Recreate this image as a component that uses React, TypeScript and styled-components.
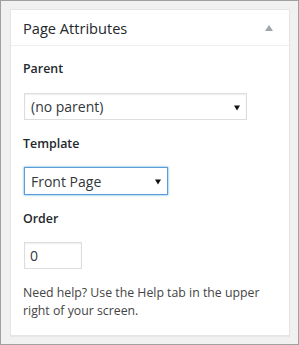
import React from "react";
import styled, { createGlobalStyle } from "styled-components";

const Global = createGlobalStyle`
  html, body { margin: 0; padding: 0; background: #f1f1f1; }
  * { box-sizing: border-box; }
`;

const Frame = styled.div`
  width: 299px;
  height: 345px;
  border: 1px solid #a0a0a0;
  background: #f1f1f1;
  padding: 8px 8px 8px 9px;
  font-family: "Open Sans", "Liberation Sans", sans-serif;
  color: #23282d;
`;

const Postbox = styled.div`
  width: 280px;
  height: 327px;
  background: #fff;
  border: 1px solid #e5e5e5;
  box-shadow: 0 1px 1px rgba(0, 0, 0, 0.04);
  display: flex;
  flex-direction: column;
`;

const Header = styled.div`
  height: 36px;
  border-bottom: 1px solid #eee;
  display: flex;
  align-items: center;
  justify-content: space-between;
  padding: 0 12px 0 12px;
`;

const Title = styled.h2`
  margin: 0;
  font-size: 14.6px;
  font-weight: 400;
  line-height: 20px;
  color: #23282d;
`;

const Toggle = styled.svg`
  width: 8px;
  height: 6px;
  margin-right: 4px;
`;

const Inside = styled.div`
  padding: 13px 12px 12px 12px;
  display: flex;
  flex-direction: column;
`;

const Label = styled.p<{ $top?: number }>`
  margin: ${(p) => p.$top ?? 0}px 0 0 0;
  font-size: 12.4px;
  font-weight: 600;
  line-height: 20px;
  color: #23282d;
`;

const SelectWrap = styled.div<{ $width: number; $top: number }>`
  position: relative;
  width: ${(p) => p.$width}px;
  margin: ${(p) => p.$top}px 0 0 1px;
`;

const Select = styled.select<{ $focus?: boolean; $height: number }>`
  appearance: none;
  -webkit-appearance: none;
  display: block;
  width: 100%;
  height: ${(p) => p.$height}px;
  margin: 0;
  padding: 0 20px 0 6px;
  font-family: "Open Sans", "Liberation Sans", sans-serif;
  font-size: 14px;
  color: #32373c;
  background: #fff;
  border: 1px solid ${(p) => (p.$focus ? "#5b9dd9" : "#ddd")};
  border-radius: 0;
  box-shadow: ${(p) =>
    p.$focus
      ? "0 0 2px rgba(30, 140, 190, 0.8)"
      : "inset 0 1px 2px rgba(0, 0, 0, 0.07)"};
  outline: none;
`;

const Arrow = styled.svg`
  position: absolute;
  right: 7px;
  top: 50%;
  width: 6px;
  height: 6px;
  margin-top: -2px;
  pointer-events: none;
`;

const NumberInput = styled.input`
  display: block;
  width: 58px;
  height: 27px;
  margin: 13px 0 0 1px;
  padding: 0 5px;
  font-family: "Open Sans", "Liberation Sans", sans-serif;
  font-size: 14px;
  color: #32373c;
  background: #fff;
  border: 1px solid #ddd;
  border-radius: 0;
  box-shadow: inset 0 1px 2px rgba(0, 0, 0, 0.07);
  outline: none;
`;

const Help = styled.p`
  margin: 15px 0 0 0;
  font-size: 12.3px;
  line-height: 18px;
  color: #444;
`;

const DropArrow = () => (
  <Arrow viewBox="0 0 6 6">
    <polygon points="0,0.5 6,0.5 3,5.5" fill="#111" />
  </Arrow>
);

export default function App() {
  return (
    <>
      <Global />
      <Frame>
        <Postbox>
          <Header>
            <Title>Page Attributes</Title>
            <Toggle viewBox="0 0 8 6">
              <polygon points="4,0 8,6 0,6" fill="#a0a5aa" />
            </Toggle>
          </Header>
          <Inside>
            <Label>Parent</Label>
            <SelectWrap $width={223} $top={14}>
              <Select $height={27} defaultValue="">
                <option value="">(no parent)</option>
              </Select>
              <DropArrow />
            </SelectWrap>
            <Label $top={14}>Template</Label>
            <SelectWrap $width={144} $top={13}>
              <Select $height={28} $focus defaultValue="front">
                <option value="front">Front Page</option>
              </Select>
              <DropArrow />
            </SelectWrap>
            <Label $top={14}>Order</Label>
            <NumberInput type="text" defaultValue="0" />
            <Help>
              Need help? Use the Help tab in the upper right of your screen.
            </Help>
          </Inside>
        </Postbox>
      </Frame>
    </>
  );
}
